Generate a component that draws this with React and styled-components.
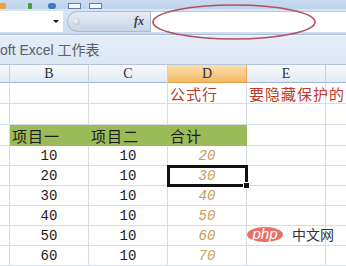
import React from 'react';
import styled, { createGlobalStyle } from 'styled-components';

const Global = createGlobalStyle`
  html, body { margin: 0; padding: 0; background: #fff; }
  body { width: 346px; height: 266px; overflow: hidden; font-family: "Noto Sans CJK SC", "Liberation Sans", sans-serif; }
`;

const Window = styled.div`
  position: relative;
  width: 346px;
  height: 266px;
  overflow: hidden;
  background: #fff;
`;

const Toolbar = styled.div`
  height: 9px;
  background: linear-gradient(#c9dbf0, #bed3ec);
  display: flex;
  align-items: flex-end;
  overflow: hidden;
`;

const Tool = styled.div`
  width: ${p => p.w}px;
  height: 6px;
  margin-left: ${p => p.ml}px;
  background: ${p => p.bg};
  border-radius: ${p => p.r || 0}px;
  border: ${p => p.border || 'none'};
  box-sizing: border-box;
`;

const FormulaBar = styled.div`
  height: 26px;
  background: linear-gradient(#d9e5f3, #cfdcee);
  display: flex;
  align-items: stretch;
  padding-top: 1px;
  box-sizing: border-box;
  border-bottom: 1px solid #a7bcd6;
`;

const NameBox = styled.div`
  width: 63px;
  margin: 1px 0 2px;
  background: #fff;
  display: flex;
  align-items: center;
  justify-content: flex-end;
  padding-right: 4px;
  box-sizing: border-box;
`;

const Arrow = styled.div`
  width: 0;
  height: 0;
  border-left: 3px solid transparent;
  border-right: 3px solid transparent;
  border-top: 3px solid #111;
`;

const Pill = styled.div`
  width: 83px;
  margin: 1px 0 2px 4px;
  border-radius: 11px 0 0 11px;
  background: linear-gradient(#e6edf6, #c8d5e6);
  border: 1px solid #a9bbd2;
  border-right: none;
  display: flex;
  align-items: center;
  justify-content: space-between;
  padding: 0 6px 0 5px;
  box-sizing: border-box;
`;

const Knob = styled.div`
  width: 7px;
  height: 7px;
  border-radius: 50%;
  background: radial-gradient(circle at 40% 40%, #f4f6f9, #aeb7c3);
`;

const Fx = styled.span`
  font-family: "Liberation Serif", serif;
  font-style: italic;
  font-weight: bold;
  font-size: 12px;
  color: #3a3f48;
`;

const Input = styled.div`
  flex: 1;
  margin: 1px 0 2px;
  background: #fff;
  border-left: 1px solid #a9bbd2;
  border-top: 1px solid #b8c9de;
`;

const Ellipse = styled.svg`
  position: absolute;
  left: 150px;
  top: 3px;
`;

const TitleBar = styled.div`
  height: 30px;
  background: linear-gradient(#e4ecf7, #dde7f4);
  border-top: 1px solid #f3f7fc;
  border-bottom: 1px solid #b3c6de;
  box-sizing: border-box;
  display: flex;
  align-items: center;
  padding-bottom: 2px;
  font-size: 14px;
  color: #5b5f66;
  font-family: "Liberation Sans", "Noto Sans CJK SC", sans-serif;
  white-space: nowrap;
`;

const Sheet = styled.div`
  display: grid;
  grid-template-columns: 10px 79px 79px 79px 79px 30px;
  grid-template-rows: 18px 21px 21px 21px repeat(6, 20px);
`;

const ColHead = styled.div`
  background: ${p => p.active
    ? 'linear-gradient(#fbe0ad, #f2b965)'
    : 'linear-gradient(#f7f9fc, #e3eaf4)'};
  border-right: 1px solid ${p => p.active ? '#e6a85a' : '#c5d2e2'};
  border-bottom: 1px solid ${p => p.active ? '#e2a04a' : '#9eb6ce'};
  box-sizing: border-box;
  font-family: "Liberation Serif", serif;
  font-size: 14px;
  color: #2b2f36;
  display: flex;
  align-items: center;
  justify-content: center;
`;

const Cell = styled.div`
  position: relative;
  box-sizing: border-box;
  border-right: 1px solid ${p => p.fill ? p.fill : '#d6dde7'};
  border-bottom: 1px solid ${p => p.fill ? p.fill : '#d6dde7'};
  background: ${p => p.fill || '#fff'};
  display: flex;
  align-items: flex-end;
  justify-content: ${p => p.align || 'flex-start'};
  padding: 0 2px 0 2px;
  font-size: ${p => p.num ? 14 : 15}px;
  letter-spacing: ${p => p.num ? 0 : 1}px;
  line-height: 18px;
  color: ${p => p.color || '#1c1c1c'};
  white-space: nowrap;
  overflow: visible;
  z-index: ${p => p.z || 0};
  font-family: ${p => p.num
    ? '"Liberation Mono", monospace'
    : '"Noto Sans CJK SC", sans-serif'};
  font-style: ${p => p.italic ? 'italic' : 'normal'};
  ${p => p.selected && `
    outline: 3px solid #111;
    outline-offset: -2px;
    &::after {
      content: "";
      position: absolute;
      right: -4px;
      bottom: -4px;
      width: 5px;
      height: 5px;
      background: #111;
      border: 1px solid #fff;
    }
  `}
`;

const Watermark = styled.div`
  position: absolute;
  left: 247px;
  top: 224px;
  display: flex;
  align-items: center;
  gap: 9px;
`;

const PhpBadge = styled.div`
  width: 36px;
  height: 15px;
  border-radius: 50%;
  background: #e8706a;
  color: #fff;
  font-family: "Liberation Sans", sans-serif;
  font-style: italic;
  font-size: 15px;
  line-height: 13px;
  text-align: center;
`;

const PhpText = styled.span`
  font-family: "Noto Sans CJK SC", sans-serif;
  font-size: 14px;
  color: #333;
`;

const data = [
  [10, 10, 20],
  [20, 10, 30],
  [30, 10, 40],
  [40, 10, 50],
  [50, 10, 60],
  [60, 10, 70],
];

const GREEN = '#9bbb59';

export default function App() {
  return (
    <Window>
      <Global />
      <Toolbar>
        <Tool w={6} ml={0} bg="#e9a53a" r={1} />
        <Tool w={4} ml={22} bg="#4f9a3a" r={1} />
        <Tool w={8} ml={16} bg="#3e78c8" r={3} />
        <Tool w={13} ml={12} bg="#f4f7fb" border="1px solid #5d7fb0" />
        <Tool w={13} ml={8} bg="#f4f7fb" border="1px solid #5d7fb0" />
      </Toolbar>
      <FormulaBar>
        <NameBox><Arrow /></NameBox>
        <Pill><Knob /><Fx>fx</Fx></Pill>
        <Input />
      </FormulaBar>
      <Ellipse width="170" height="38" viewBox="0 0 170 38">
        <ellipse cx="84" cy="19" rx="81" ry="17" fill="none" stroke="#b4505e" strokeWidth="1.6" />
      </Ellipse>
      <TitleBar>oft Excel 工作表</TitleBar>
      <Sheet>
        <ColHead />
        <ColHead>B</ColHead>
        <ColHead>C</ColHead>
        <ColHead active>D</ColHead>
        <ColHead>E</ColHead>
        <ColHead />

        <Cell /><Cell /><Cell />
        <Cell color="#c0392b">公式行</Cell>
        <Cell color="#c0392b" z={1}>要隐藏保护的</Cell>
        <Cell />

        <Cell /><Cell /><Cell /><Cell /><Cell /><Cell />

        <Cell />
        <Cell fill={GREEN}>项目一</Cell>
        <Cell fill={GREEN}>项目二</Cell>
        <Cell fill={GREEN}>合计</Cell>
        <Cell /><Cell />

        {data.map((r, i) => (
          <React.Fragment key={i}>
            <Cell />
            <Cell num align="center">{r[0]}</Cell>
            <Cell num align="center">{r[1]}</Cell>
            <Cell num italic align="center" color="#c89a5e" selected={i === 1} z={i === 1 ? 2 : 0}>{r[2]}</Cell>
            <Cell />
            <Cell />
          </React.Fragment>
        ))}
      </Sheet>
      <Watermark>
        <PhpBadge>php</PhpBadge>
        <PhpText>中文网</PhpText>
      </Watermark>
    </Window>
  );
}
